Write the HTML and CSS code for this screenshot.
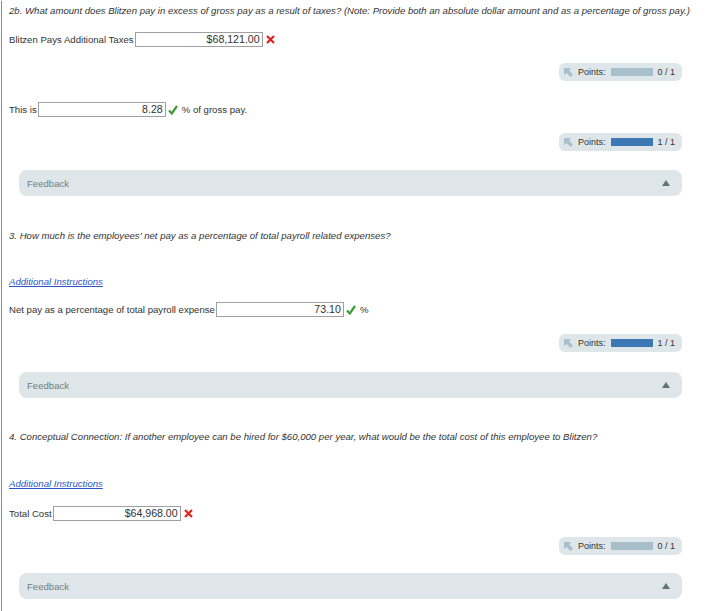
FILE: index.html
```html
<!DOCTYPE html>
<html>
<head>
<meta charset="utf-8">
<link rel="stylesheet" href="styles.css">
</head>
<body>
<div class="page">
  <div class="q q-first">2b. What amount does Blitzen pay in excess of gross pay as a result of taxes? (Note: Provide both an absolute dollar amount and as a percentage of gross pay.)</div>
  <div class="row r1"><span class="label">Blitzen Pays Additional Taxes</span><span class="inp">$68,121.00</span><svg class="wrong" width="9" height="9" viewBox="0 0 9 9"><path d="M1 1 L8 8 M8 1 L1 8" stroke="#e8201c" stroke-width="2.2"/></svg></div>
  <div class="pts-row p1"><div class="pill"><svg class="ico" width="9" height="9" viewBox="0 0 9 9"><polygon points="0,0 7,0 5,2.5 9,6.5 6.5,9 2.5,5 0,7" fill="#a7c0cb"/></svg><span>Points:</span><span class="bar empty"></span><span class="score">0 / 1</span></div></div>
  <div class="row r2"><span class="label">This is</span><span class="inp">8.28</span><svg class="right" width="10" height="10" viewBox="0 0 10 10"><path d="M1 5.5 L3.8 8.5 L9 1" stroke="#3f9c35" stroke-width="2.2" fill="none"/></svg><span class="after">% of gross pay.</span></div>
  <div class="pts-row p2"><div class="pill"><svg class="ico" width="9" height="9" viewBox="0 0 9 9"><polygon points="0,0 7,0 5,2.5 9,6.5 6.5,9 2.5,5 0,7" fill="#a7c0cb"/></svg><span>Points:</span><span class="bar full"></span><span class="score">1 / 1</span></div></div>
  <div class="feedback f1"><span>Feedback</span><span class="tri"></span></div>

  <div class="q q3">3. How much is the employees' net pay as a percentage of total payroll related expenses?</div>
  <div class="link-row l1"><a class="link" href="#">Additional Instructions</a></div>
  <div class="row r3"><span class="label">Net pay as a percentage of total payroll expense</span><span class="inp">73.10</span><svg class="right" width="10" height="10" viewBox="0 0 10 10"><path d="M1 5.5 L3.8 8.5 L9 1" stroke="#3f9c35" stroke-width="2.2" fill="none"/></svg><span class="after">%</span></div>
  <div class="pts-row p3"><div class="pill"><svg class="ico" width="9" height="9" viewBox="0 0 9 9"><polygon points="0,0 7,0 5,2.5 9,6.5 6.5,9 2.5,5 0,7" fill="#a7c0cb"/></svg><span>Points:</span><span class="bar full"></span><span class="score">1 / 1</span></div></div>
  <div class="feedback f2"><span>Feedback</span><span class="tri"></span></div>

  <div class="q q4">4. Conceptual Connection: If another employee can be hired for $60,000 per year, what would be the total cost of this employee to Blitzen?</div>
  <div class="link-row l2"><a class="link" href="#">Additional Instructions</a></div>
  <div class="row r4"><span class="label">Total Cost</span><span class="inp">$64,968.00</span><svg class="wrong" width="9" height="9" viewBox="0 0 9 9"><path d="M1 1 L8 8 M8 1 L1 8" stroke="#e8201c" stroke-width="2.2"/></svg></div>
  <div class="pts-row p4"><div class="pill"><svg class="ico" width="9" height="9" viewBox="0 0 9 9"><polygon points="0,0 7,0 5,2.5 9,6.5 6.5,9 2.5,5 0,7" fill="#a7c0cb"/></svg><span>Points:</span><span class="bar empty"></span><span class="score">0 / 1</span></div></div>
  <div class="feedback f3"><span>Feedback</span><span class="tri"></span></div>
</div>
</body>
</html>
```

FILE: styles.css
```css
html, body {
  margin: 0;
  padding: 0;
  background: #fff;
}
body {
  font-family: "Liberation Sans", Arial, sans-serif;
  color: #333;
  font-size: 9.6px;
  overflow: hidden;
  height: 611px;
}
.page {
  margin-left: 1px;
  border-left: 1px solid #8a8a8a;
  height: 611px;
  width: 681px;
  padding-left: 7px;
  box-sizing: border-box;
}
.q {
  font-style: italic;
  height: 20px;
  line-height: 20px;
  white-space: nowrap;
  color: #333;
}
.q-first { margin-top: 1px; }
.q3 { margin-top: 30px; }
.q4 { margin-top: 29px; }
.row {
  display: flex;
  align-items: center;
  height: 15px;
}
.r1 { margin-top: 11px; }
.r2 { margin-top: 21px; }
.r3 { margin-top: 12px; }
.r4 { margin-top: 14px; }
.label { margin-right: 1px; }
.inp {
  box-sizing: border-box;
  width: 128px;
  height: 15px;
  border: 1px solid #a0a0a0;
  background: #fff;
  text-align: right;
  font-size: 10.6px;
  line-height: 13px;
  padding-right: 2px;
  color: #333;
}
.wrong {
  margin-left: 3px;
}
.right {
  margin-left: 2px;
}
.after { margin-left: 4px; }
.pts-row {
  display: flex;
  justify-content: flex-end;
  height: 18px;
}
.p1 { margin-top: 16px; }
.p2 { margin-top: 16px; }
.p3 { margin-top: 17px; }
.p4 { margin-top: 16px; }
.pill {
  display: flex;
  align-items: center;
  height: 18px;
  width: 123px;
  box-sizing: border-box;
  background: #dfe6e9;
  border-radius: 6px;
  padding-left: 5px;
  font-size: 9px;
  color: #333;
}
.ico { margin-right: 5px; }
.bar {
  width: 42px;
  height: 8px;
  margin-left: 5px;
  margin-right: 5px;
}
.bar.empty { background: #a7bfcb; }
.bar.full { background: #3b78b4; }
.feedback {
  margin-left: 10px;
  height: 26px;
  background: #dfe6e9;
  border-radius: 8px;
  display: flex;
  align-items: center;
  justify-content: space-between;
  padding: 0 8px 0 8px;
  color: #6c8080;
  font-size: 9.6px;
}
.f1 { margin-top: 19px; }
.f2 { margin-top: 20px; }
.f3 { margin-top: 18px; }
.tri {
  width: 0;
  height: 0;
  border-left: 4px solid transparent;
  border-right: 4px solid transparent;
  border-bottom: 6px solid #5c7575;
  margin-right: 4px;
}
.link-row {
  height: 16px;
  line-height: 16px;
}
.l1 { margin-top: 28px; }
.l2 { margin-top: 29px; }
.link {
  color: #2b55c9;
  font-style: italic;
  text-decoration: underline;
}
```
